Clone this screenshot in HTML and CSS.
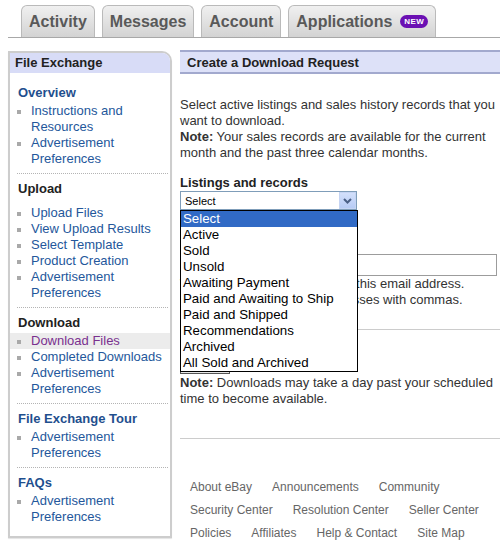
FILE: index.html
```html
<!DOCTYPE html>
<html>
<head>
<meta charset="utf-8">
<link rel="stylesheet" href="styles.css">
</head>
<body>
<nav class="tabs">
  <a class="tab">Activity</a>
  <a class="tab">Messages</a>
  <a class="tab">Account</a>
  <a class="tab">Applications <span class="badge">NEW</span></a>
</nav>
<div class="layout">
  <aside class="side">
    <div class="side-head">File Exchange</div>
    <div class="sec first">
      <h3 class="sec-title blue">Overview</h3>
      <ul class="links">
        <li><a>Instructions and Resources</a></li>
        <li><a>Advertisement Preferences</a></li>
      </ul>
    </div>
    <div class="sec">
      <h3 class="sec-title spaced">Upload</h3>
      <ul class="links">
        <li><a>Upload Files</a></li>
        <li><a>View Upload Results</a></li>
        <li><a>Select Template</a></li>
        <li><a>Product Creation</a></li>
        <li><a>Advertisement Preferences</a></li>
      </ul>
    </div>
    <div class="sec">
      <h3 class="sec-title">Download</h3>
      <ul class="links">
        <li class="current"><a>Download Files</a></li>
        <li><a>Completed Downloads</a></li>
        <li><a>Advertisement Preferences</a></li>
      </ul>
    </div>
    <div class="sec">
      <h3 class="sec-title blue">File Exchange Tour</h3>
      <ul class="links">
        <li><a>Advertisement Preferences</a></li>
      </ul>
    </div>
    <div class="sec last">
      <h3 class="sec-title blue">FAQs</h3>
      <ul class="links">
        <li><a>Advertisement Preferences</a></li>
      </ul>
    </div>
  </aside>
  <main class="main">
    <h2 class="main-head">Create a Download Request</h2>
    <p class="intro">Select active listings and sales history records that you want to download.<br><b>Note:</b> Your sales records are available for the current month and the past three calendar months.</p>
    <label class="field-label">Listings and records</label>
    <div class="select-wrap">
      <div class="select">
        <span class="select-value">Select</span>
        <span class="select-arrow"><svg width="9" height="6" viewBox="0 0 9 6"><path d="M1 1 L4.5 4.5 L8 1" fill="none" stroke="#4a5f86" stroke-width="2"/></svg></span>
      </div>
      <ul class="options">
        <li class="selected">Select</li>
        <li>Active</li>
        <li>Sold</li>
        <li>Unsold</li>
        <li>Awaiting Payment</li>
        <li>Paid and Awaiting to Ship</li>
        <li>Paid and Shipped</li>
        <li>Recommendations</li>
        <li>Archived</li>
        <li>All Sold and Archived</li>
      </ul>
    </div>
    <label class="email-label">Email address</label>
    <input class="email" type="text">
    <p class="hint">We will send a confirmation to this email address.<br>Separate multiple email addresses with commas.</p>
    <hr class="rule">
    <button class="submit">Submit</button>
    <p class="note"><b>Note:</b> Downloads may take a day past your scheduled time to become available.</p>
    <hr class="rule rule-bottom">
    <footer class="footer">
      <a>About eBay</a><a>Announcements</a><a>Community</a>
      <a>Security Center</a><a>Resolution Center</a><a>Seller Center</a>
      <a>Policies</a><a>Affiliates</a><a>Help &amp; Contact</a><a>Site Map</a>
    </footer>
  </main>
</div>
</body>
</html>
```
FILE: styles.css
```css
* { box-sizing: border-box; }
html { overflow: hidden; }
body {
  margin: 0;
  padding: 0 0 0 8px;
  font-family: Arial, "Liberation Sans", sans-serif;
  font-size: 13px;
  color: #333;
}
a { text-decoration: none; }

/* tabs */
.tabs {
  display: flex;
  align-items: flex-end;
  gap: 7px;
  height: 38px;
  padding: 6px 0 0 13px;
  border-bottom: 1px solid #a8a8a8;
}
.tab {
  display: flex;
  align-items: center;
  height: 32px;
  padding: 0 7px;
  border: 1px solid #bababa;
  border-bottom: none;
  border-radius: 6px 6px 0 0;
  background: linear-gradient(#f0f0f0, #d3d3d3);
  font-size: 16px;
  font-weight: bold;
  color: #595959;
}
.badge {
  display: inline-block;
  margin-left: 8px;
  width: 28px;
  height: 13px;
  line-height: 13px;
  border-radius: 7px;
  background: #6b10b3;
  color: #fff;
  font-size: 8px;
  text-align: center;
  letter-spacing: 0.5px;
}

/* layout */
.layout {
  display: flex;
  align-items: flex-start;
  margin-top: 12px;
}

/* sidebar */
.side {
  width: 164px;
  flex-shrink: 0;
  margin-top: 1px;
  border: 2px solid #cdcdcd;
  border-radius: 0 10px 0 0;
  overflow: hidden;
  box-shadow: 0 1px 1px #e4e4e4;
}
.side-head {
  height: 20px;
  line-height: 20px;
  padding-left: 5px;
  background: #d8dcf7;
  font-weight: bold;
  color: #222;
}
.sec { padding-top: 5px; }
.sec.first { padding-top: 10px; }
.sec::after {
  content: "";
  display: block;
  margin: 6px 2px 0 7px;
  border-bottom: 1px dotted #b4b4b4;
}
.sec.last { padding-bottom: 11px; }
.sec.last::after { display: none; }
.sec-title {
  margin: 0;
  padding-left: 8px;
  line-height: 20px;
  font-size: 13px;
  font-weight: bold;
  color: #222;
}
.sec-title.blue { color: #1f4f8e; }
.sec-title.spaced { margin-bottom: 6px; }
.links {
  list-style: none;
  margin: 0;
  padding: 0;
}
.links li {
  display: flex;
  align-items: flex-start;
  padding-left: 7px;
  padding-right: 4px;
  line-height: 16px;
}
.links li::before {
  content: "";
  flex-shrink: 0;
  width: 4px;
  height: 4px;
  margin: 7px 10px 0 0;
  background: #a9a9a9;
}
.links a { color: #24579b; }
.links li.current { background: #ececec; }
.links li.current a { color: #7a318f; }

/* main */
.main {
  width: 330px;
  flex-shrink: 0;
  margin-left: 8px;
}
.main-head {
  margin: 0;
  height: 24px;
  line-height: 21px;
  padding-left: 7px;
  border-top: 2px solid #a2a9ce;
  border-bottom: 2px solid #a2a9ce;
  background: #dde1f8;
  font-size: 13px;
  font-weight: bold;
  color: #222;
}
.intro {
  margin: 23px 0 0;
  line-height: 16px;
}
.field-label, .email-label {
  display: block;
  line-height: 16px;
  font-weight: bold;
  color: #222;
}
.field-label { margin-top: 14px; }
.select-wrap {
  position: relative;
  width: 177px;
  margin-top: 0;
}
.select {
  display: flex;
  align-items: center;
  justify-content: space-between;
  height: 19px;
  border: 1px solid #7f9db9;
  background: #fff;
  padding-left: 4px;
  font-size: 11px;
  color: #000;
}
.select-arrow {
  display: flex;
  align-items: center;
  justify-content: center;
  width: 17px;
  height: 17px;
  background: linear-gradient(#d3e0fb, #b7cbf5);
  border: 1px solid #c5d4f3;
}
.options {
  position: absolute;
  top: 19px;
  left: 0;
  z-index: 2;
  width: 178px;
  margin: 0;
  padding: 0;
  list-style: none;
  background: #fff;
  border: 1px solid #000;
}
.options li {
  line-height: 16px;
  padding-left: 2px;
  font-size: 13.3px;
  color: #000;
}
.options li.selected {
  background: #316ac5;
  color: #fff;
}
.email-label { margin-top: 22px; }
.email {
  display: block;
  width: 317px;
  height: 22px;
  margin-top: 6px;
  border: 1px solid #9c9c9c;
  background: #fff;
}
.hint {
  margin: 0;
  line-height: 16px;
}
.rule {
  margin: 21px 0 0;
  height: 0;
  border: 0;
  border-top: 1px solid #cccccc;
}
.submit {
  display: block;
  margin-top: 20px;
  width: 50px;
  height: 24px;
  border: 1px solid #555;
  background: #e6e6e6;
  font-size: 12px;
}
.note {
  margin: 1px 0 0;
  line-height: 16px;
}
.rule-bottom { margin-top: 31px; }
.footer {
  display: flex;
  flex-wrap: wrap;
  column-gap: 20px;
  width: 320px;
  margin-top: 37px;
  padding-left: 10px;
  line-height: 23px;
  font-size: 12px;
}
.footer a { color: #666; }
```
